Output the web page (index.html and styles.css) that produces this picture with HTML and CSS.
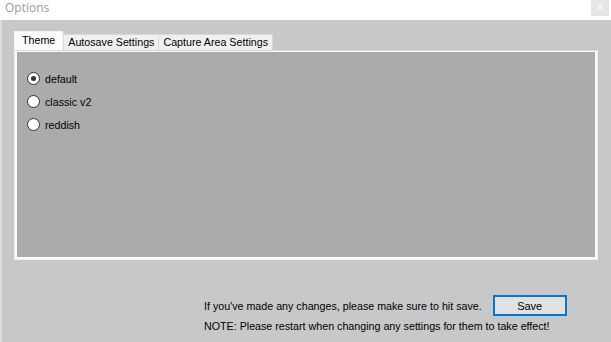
FILE: index.html
```html
<!DOCTYPE html>
<html>
<head>
<meta charset="utf-8">
<link rel="stylesheet" href="styles.css">
</head>
<body>
<div class="window">
  <div class="titlebar">
    <span class="title">Options</span>
    <span class="close">x</span>
  </div>
  <div class="client">
    <div class="tabs">
      <div class="tab active">Theme</div>
      <div class="tab">Autosave Settings</div>
      <div class="tab">Capture Area Settings</div>
    </div>
    <div class="panel">
      <div class="panel-inner">
        <label class="radio"><span class="dot checked"></span>default</label>
        <label class="radio"><span class="dot"></span>classic v2</label>
        <label class="radio"><span class="dot"></span>reddish</label>
      </div>
    </div>
    <div class="footer">
      <div class="row">
        <span class="msg">If you've made any changes, please make sure to hit save.</span>
        <button class="save">Save</button>
      </div>
      <div class="note">NOTE: Please restart when changing any settings for them to take effect!</div>
    </div>
  </div>
</div>
</body>
</html>
```
FILE: styles.css
```css
html, body {
  margin: 0;
  padding: 0;
  width: 611px;
  height: 342px;
  overflow: hidden;
  background: #c8c8c8;
}
.window {
  width: 611px;
  height: 342px;
  display: flex;
  flex-direction: column;
  font-family: "Liberation Sans", Arial, sans-serif;
  font-size: 10.7px;
  color: #000;
}
.titlebar {
  height: 20px;
  background: #fff;
  display: flex;
  justify-content: space-between;
  align-items: flex-start;
  flex: none;
}
.title {
  font-family: "Open Sans", "Noto Sans", sans-serif;
  font-size: 12px;
  color: #9a9aa6;
  margin-left: 5px;
  line-height: 15px;
}
.close {
  width: 18px;
  height: 16px;
  margin-right: 2px;
  background: #e6e6e6;
  color: #fafafa;
  font-size: 11px;
  font-weight: bold;
  text-align: center;
  line-height: 13px;
}
.client {
  flex: 1;
  border-left: 2px solid #dedede;
  padding: 12px 0 0 12px;
  display: flex;
  flex-direction: column;
}
.tabs {
  display: flex;
  align-items: flex-end;
  height: 18px;
  position: relative;
  z-index: 1;
}
.tab {
  height: 15px;
  line-height: 15px;
  padding: 0 4px;
  background: #f0f0f0;
  border: 1px solid #d9d9d9;
  border-bottom: none;
  margin-left: -1px;
}
.tab:first-child { margin-left: 0; }
.tab.active {
  height: 18px;
  line-height: 17px;
  background: #fbfbfb;
  padding: 0 7px 0 7px;
  border-color: #f4f4f4;
  margin-right: 1px;
}
.panel {
  width: 584px;
  height: 210px;
  box-sizing: border-box;
  border: 1px solid #f0f0f0;
  border-top-color: #dadada;
  background: #fafafa;
  padding: 1px 2px 2px 2px;
  display: flex;
}
.panel-inner {
  flex: 1;
  background: #ababab;
  padding: 20px 0 0 10px;
  display: flex;
  flex-direction: column;
  gap: 10px;
}
.radio {
  display: flex;
  align-items: center;
  height: 13px;
  gap: 5px;
}
.dot {
  width: 11px;
  height: 11px;
  border: 1px solid #333;
  border-radius: 50%;
  background: #fff;
  display: flex;
  align-items: center;
  justify-content: center;
}
.dot.checked::after {
  content: "";
  width: 5px;
  height: 5px;
  border-radius: 50%;
  background: #333;
}
.footer {
  margin-top: 35px;
  padding-left: 190px;
}
.row {
  display: flex;
  align-items: center;
  gap: 10px;
  height: 21px;
}
.save {
  width: 74px;
  height: 21px;
  box-sizing: border-box;
  border: 2px solid #0078d7;
  background: #e1e1e1;
  font-family: "Liberation Sans", Arial, sans-serif;
  font-size: 11px;
  padding: 0;
  margin-left: 1px;
}
.note {
  margin-top: 4px;
}
```
